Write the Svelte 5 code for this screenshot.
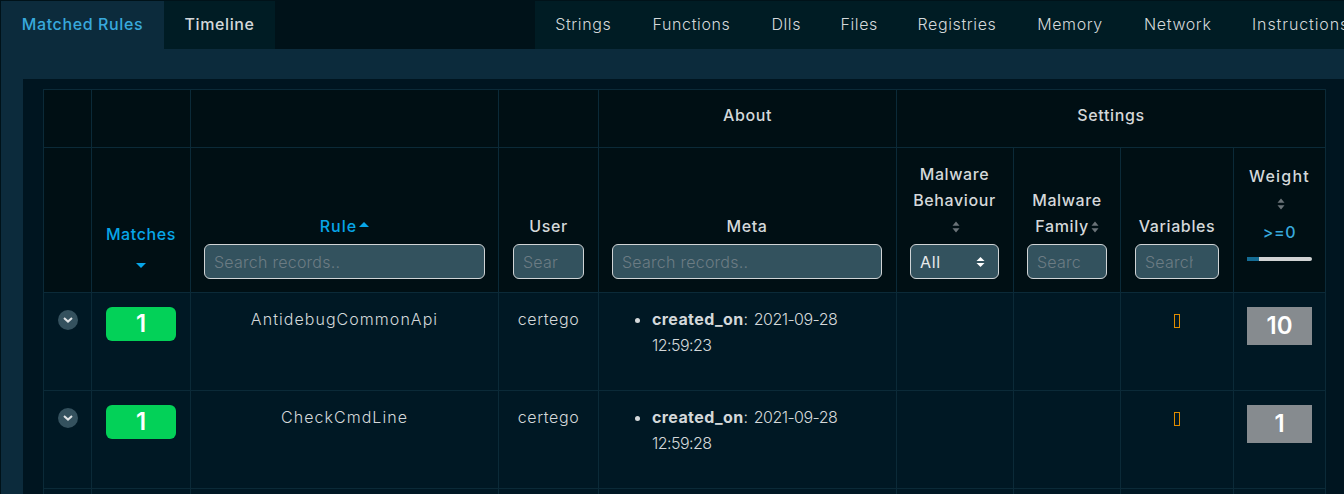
<script>
  const tabsRight = ['Strings', 'Functions', 'Dlls', 'Files', 'Registries', 'Memory', 'Network'];
  const rows = [
    { rule: 'AntidebugCommonApi', time: '12:59:23', weight: 10 },
    { rule: 'CheckCmdLine', time: '12:59:28', weight: 1 }
  ];
</script>

{#snippet sort()}
  <svg class="sort" width="8" height="12" viewBox="0 0 8 12"><path d="M4 0.5 7.5 4.8H.5zM4 11.5 .5 7.2h7z" /></svg>
{/snippet}

<div class="page">
  <nav class="tabs">
    <div class="tab active">Matched Rules</div>
    <div class="tab strong">Timeline</div>
    <div class="gap"></div>
    {#each tabsRight as t}
      <div class="tab">{t}</div>
    {/each}
    <div class="tab lastTab">Instructions</div>
  </nav>
  <section class="pane">
    <div class="card">
      <table>
        <colgroup>
          <col class="c1" /><col class="c2" /><col class="c3" /><col class="c4" /><col class="c5" />
          <col class="c6" /><col class="c7" /><col class="c8" /><col class="c9" />
        </colgroup>
        <thead>
          <tr class="group">
            <th></th><th></th><th></th><th></th>
            <th>About</th>
            <th colspan="4">Settings</th>
          </tr>
          <tr class="heads">
            <th></th>
            <th class="blue">
              <div>Matches</div>
              <svg class="caret-down" width="10" height="5" viewBox="0 0 10 5"><path d="M0 0h10L5 5z" /></svg>
            </th>
            <th>
              <div class="blue rule">Rule <svg class="caret-up" width="10" height="5" viewBox="0 0 10 5"><path d="M0 5h10L5 0z" /></svg></div>
              <input placeholder="Search records.." />
            </th>
            <th class="narrow">
              <div>User</div>
              <input placeholder="Search records.." />
            </th>
            <th class="pr">
              <div>Meta</div>
              <input placeholder="Search records.." />
            </th>
            <th class="pr">
              <div>Malware<br />Behaviour<br />{@render sort()}</div>
              <div class="select">All <svg width="9" height="12" viewBox="0 0 9 12"><path d="M4.5 1 8.5 5H.5zM4.5 11 .5 7h8z" /></svg></div>
            </th>
            <th>
              <div>Malware<br />Family{@render sort()}</div>
              <input class="clip" placeholder="Search records.." />
            </th>
            <th class="narrow">
              <div>Variables</div>
              <input class="clip" placeholder="Search records.." />
            </th>
            <th class="weight">
              <div class="wtitle">Weight</div>
              <div class="sortline">{@render sort()}</div>
              <div class="range">&gt;=0</div>
              <div class="slider"><span></span></div>
            </th>
          </tr>
        </thead>
        <tbody>
          {#each rows as r}
            <tr>
              <td class="exp">
                <span class="chev"><svg width="10" height="6" viewBox="0 0 10 6"><path d="M1 1l4 3.6L9 1" /></svg></span>
              </td>
              <td class="narrow"><div class="badge">1</div></td>
              <td class="rulecell">{r.rule}</td>
              <td>certego</td>
              <td class="meta">
                <ul><li><b>created_on</b>: <span class="num">2021-09-28 {r.time}</span></li></ul>
              </td>
              <td></td>
              <td></td>
              <td><span class="tofu"></span></td>
              <td><div class="w">{r.weight}</div></td>
            </tr>
          {/each}
          <tr class="last"><td></td><td></td><td></td><td></td><td></td><td></td><td></td><td></td><td></td></tr>
        </tbody>
      </table>
    </div>
  </section>
</div>

<style>
  :global(body) {
    margin: 0;
    background: #001219;
    overflow: hidden;
  }
  .page {
    height: 494px;
    overflow: hidden;
    padding: 1px 0 0 1px;
    box-sizing: border-box;
    font-family: Inter, "Noto Sans", sans-serif;
    font-size: 16px;
    letter-spacing: 0.62px;
    line-height: 26px;
    color: #d4d8da;
  }
  .tabs {
    display: grid;
    grid-template-columns: 163px 111px 260px 96.5px 120px 69.5px 76.5px 119px 107px 108.5px 1fr;
    height: 48px;
    white-space: nowrap;
  }
  .tab {
    background: #001c24;
    line-height: 46px;
    text-align: center;
    font-weight: 300;
    overflow: hidden;
  }
  .lastTab {
    text-align: left;
    padding-left: 20px;
    letter-spacing: 0.9px;
  }
  .gap {
    background: #001219;
  }
  .tab.active {
    background: #0c2b3c;
    color: #38a9dc;
    font-weight: 500;
  }
  .tab.strong {
    font-weight: 500;
  }
  .pane {
    background: #0c2b3c;
    padding: 30px 0 0 22px;
    height: 500px;
  }
  .card {
    background: #001520;
    padding: 10px 18px 0 20px;
    height: 500px;
  }
  table {
    border-collapse: collapse;
    table-layout: fixed;
    width: 1283px;
    background: #001824;
  }
  .c1 { width: 48px; }
  .c2 { width: 99px; }
  .c3 { width: 308px; }
  .c4 { width: 100px; }
  .c5 { width: 298px; }
  .c6 { width: 117px; }
  .c7 { width: 107px; }
  .c8 { width: 113px; }
  .c9 { width: 92px; }
  th, td {
    border: 1px solid #0b2a38;
    padding: 13px;
    vertical-align: top;
    text-align: center;
    box-sizing: border-box;
  }
  thead th {
    background: #000f14;
    font-weight: 500;
    vertical-align: bottom;
  }
  .group th {
    height: 58px;
    vertical-align: top;
    padding: 12px 0 0;
  }
  .heads th {
    height: 145px;
  }
  th.narrow, td.narrow {
    padding-left: 14px;
    padding-right: 14px;
  }
  th.pr {
    padding-right: 14px;
  }
  .blue {
    color: #07a6e8;
  }
  .rule {
    letter-spacing: 1px;
  }
  .wtitle {
    letter-spacing: 1.2px;
  }
  input, .select {
    display: flex;
    align-items: center;
    justify-content: space-between;
    width: 100%;
    height: 35px;
    margin-top: 5px;
    padding: 0 9px;
    box-sizing: border-box;
    background: #33525e;
    border: 1px solid #d0d4d6;
    border-radius: 6px;
    font: inherit;
    font-weight: 300;
    letter-spacing: 0.25px;
    color: #e8eaeb;
    outline: none;
  }
  .narrow input, .clip {
    padding-right: 25px;
  }
  input::placeholder {
    color: #6c7c84;
    opacity: 1;
  }
  .select {
    font-weight: 400;
    letter-spacing: 0.62px;
  }
  .select svg {
    fill: #fff;
    margin-right: 4px;
  }
  .sort {
    fill: #6a7378;
    vertical-align: -1px;
    margin-left: 2px;
  }
  .caret-down {
    display: block;
    margin: 16px auto 11px;
    fill: #07a6e8;
  }
  .caret-up {
    fill: #07a6e8;
    vertical-align: 5px;
    margin-left: -3px;
  }
  .wtitle {
    margin-bottom: 1px;
  }
  .sortline {
    height: 26px;
  }
  .range {
    color: #38a9dc;
    margin-top: 3px;
  }
  .slider {
    height: 4px;
    background: #d0d2d3;
    margin: 12px 0 18px;
    border-radius: 0 2px 2px 0;
  }
  .slider span {
    display: block;
    width: 12px;
    height: 4px;
    background: #146c94;
  }
  tbody td {
    height: 98px;
    font-weight: 300;
  }
  td.rulecell {
    letter-spacing: 1.05px;
    padding-left: 0;
    padding-right: 0;
  }
  td.exp {
    padding: 17px 0 0;
  }
  .chev {
    display: flex;
    align-items: center;
    justify-content: center;
    width: 20px;
    height: 20px;
    margin: 0 auto;
    border-radius: 50%;
    background: #34515e;
  }
  .chev svg {
    fill: none;
    stroke: #dfe3e5;
    stroke-width: 2;
  }
  .badge {
    height: 34px;
    margin-top: 1px;
    line-height: 34px;
    border-radius: 6px;
    background: #03d158;
    color: #fff;
    font-size: 24px;
    font-weight: 600;
    letter-spacing: 0;
  }
  ul {
    margin: 0;
    padding: 0 0 0 40px;
    text-align: left;
  }
  li::marker {
    color: #d4d8da;
  }
  b {
    font-weight: 700;
    letter-spacing: 0.4px;
  }
  .num {
    letter-spacing: -0.55px;
  }
  .tofu {
    display: inline-block;
    width: 6px;
    height: 14px;
    border: 1px solid #e08c00;
    box-sizing: border-box;
    vertical-align: -3px;
  }
  .w {
    height: 38px;
    margin-top: 1px;
    line-height: 38px;
    background: #868b8f;
    color: #fff;
    font-size: 24px;
    font-weight: 600;
    letter-spacing: 0;
  }
</style>
